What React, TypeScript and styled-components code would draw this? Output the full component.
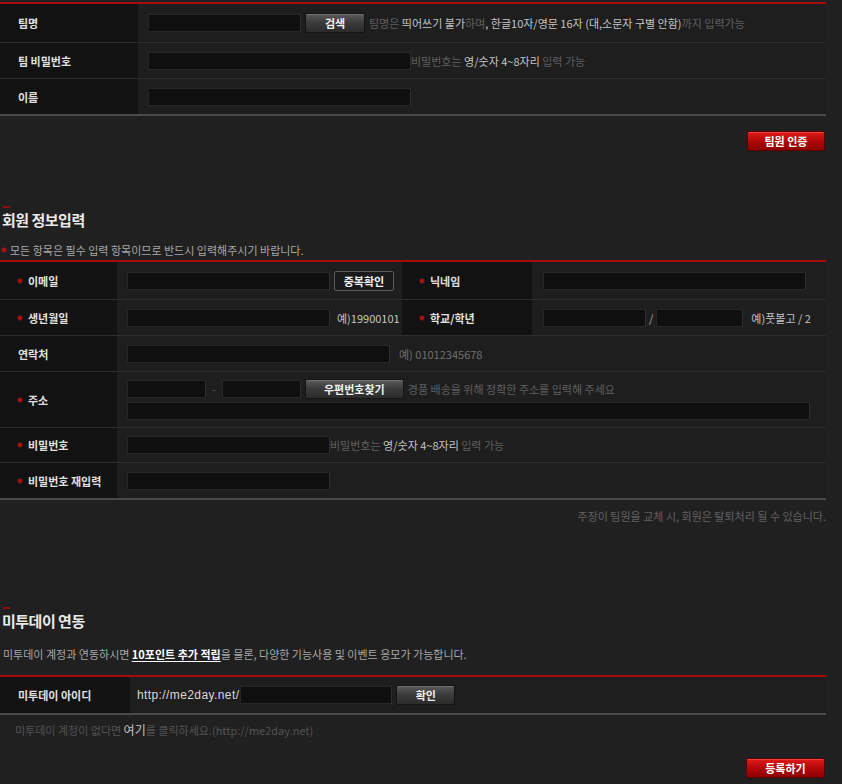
import React from 'react';
import styled, { createGlobalStyle, css } from 'styled-components';

const GlobalStyle = createGlobalStyle`
  html, body {
    margin: 0;
    padding: 0;
    background: #202020;
  }
  body {
    font-family: 'Noto Sans CJK KR', 'Liberation Sans', sans-serif;
    font-size: 11px;
    color: #aaa;
  }
`;

const Page = styled.div`
  width: 826px;
  padding-top: 2px;
  padding-bottom: 20px;
`;

const Table = styled.div`
  border-top: 2px solid #a80a0a;
  border-bottom: 2px solid #4a4a4a;
  box-shadow: inset 0 1px 0 #3a0606;
`;

const Row = styled.div<{ $h: number }>`
  display: flex;
  box-sizing: border-box;
  height: ${(p) => p.$h}px;
  & + & {
    border-top: 1px solid #2c2c2c;
  }
`;

const Label = styled.div<{ $w: number }>`
  display: flex;
  align-items: center;
  width: ${(p) => p.$w}px;
  flex-shrink: 0;
  box-sizing: border-box;
  padding-left: 18px;
  background: #121212;
  color: #e0e0e0;
  font-weight: bold;
  font-size: 11px;
`;

const Star = styled.span`
  display: inline-block;
  width: 4px;
  height: 4px;
  margin-right: 6px;
  border-radius: 50%;
  background: #b01010;
  box-shadow: 0 0 2px #d02020;
`;

const Cell = styled.div<{ $pad?: number; $w?: number; $gap?: number }>`
  display: flex;
  align-items: center;
  box-sizing: border-box;
  gap: ${(p) => p.$gap ?? 4}px;
  padding-left: ${(p) => p.$pad ?? 10}px;
  background: #1e1e1e;
  ${(p) =>
    p.$w
      ? css`
          width: ${p.$w}px;
          flex-shrink: 0;
        `
      : css`
          flex: 1;
        `}
`;

const CellStack = styled.div`
  flex: 1;
  display: flex;
  flex-direction: column;
  justify-content: center;
  gap: 3px;
  padding-left: 10px;
  background: #1e1e1e;
`;

const Line = styled.div`
  display: flex;
  align-items: center;
  gap: 4px;
`;

const Input = styled.input<{ $w: number }>`
  width: ${(p) => p.$w}px;
  height: 18px;
  box-sizing: border-box;
  margin: 0;
  padding: 0 4px;
  background: #0f0f0f;
  border: 1px solid #262626;
  border-right-color: #2e2e2e;
  color: #ccc;
  font-size: 11px;
  outline: none;
`;

const GrayButton = styled.button<{ $w: number; $outline?: boolean }>`
  width: ${(p) => p.$w}px;
  height: 20px;
  margin: 0;
  padding: 0;
  font-family: inherit;
  font-size: 11px;
  font-weight: bold;
  color: #f0f0f0;
  border-radius: 2px;
  cursor: pointer;
  ${(p) =>
    p.$outline
      ? css`
          background: #1a1a1a;
          border: 1px solid #5a5a5a;
        `
      : css`
          background: linear-gradient(#5a5a5a, #3a3a3a 50%, #2b2b2b);
          border: 1px solid #151515;
          box-shadow: inset 0 1px 0 #707070;
        `}
`;

const RedButton = styled.button<{ $w: number }>`
  width: ${(p) => p.$w}px;
  height: 20px;
  margin: 0;
  padding: 0;
  font-family: inherit;
  font-size: 11px;
  font-weight: bold;
  color: #fff;
  background: linear-gradient(#e01a1a, #b00808 50%, #8c0000);
  border: 1px solid #5a0000;
  border-radius: 2px;
  box-shadow: inset 0 1px 0 #f04040;
  cursor: pointer;
`;

const Help = styled.span<{ $bright?: boolean }>`
  color: ${(p) => (p.$bright ? '#c4c4c4' : '#5e5e5e')};
  font-size: 11px;
  white-space: nowrap;
`;

const HelpGroup = styled.span<{ $shift?: number }>`
  margin-left: ${(p) => p.$shift ?? 0}px;
  white-space: nowrap;
`;

const ButtonBar = styled.div<{ $top: number }>`
  display: flex;
  justify-content: flex-end;
  margin-top: ${(p) => p.$top}px;
  padding-right: 1px;
`;

const SectionHead = styled.div<{ $top: number }>`
  margin-top: ${(p) => p.$top}px;
  padding-left: 3px;
`;

const Marker = styled.div`
  width: 7px;
  height: 2px;
  background: #8a1010;
`;

const Title = styled.h2`
  margin: 2px 0 0 -1px;
  font-size: 15px;
  line-height: 20px;
  font-weight: bold;
  color: #eaeaea;
  letter-spacing: -0.5px;
`;

const Notice = styled.div<{ $top: number; $bottom: number }>`
  display: flex;
  align-items: center;
  margin: ${(p) => p.$top}px 0 ${(p) => p.$bottom}px 3px;
  line-height: 16px;
  color: #a8a8a8;
  font-size: 11px;
`;

const Strong = styled.span`
  color: #fff;
  font-weight: bold;
  text-decoration: underline;
  text-underline-offset: 2px;
`;

const RightNote = styled.div`
  margin-top: 9px;
  text-align: right;
  line-height: 14px;
  color: #616161;
  font-size: 11px;
`;

const FootNote = styled.div`
  margin-top: 8px;
  padding-left: 15px;
  line-height: 14px;
  font-size: 11px;
  color: #535353;
`;

const Slash = styled.span`
  color: #aaa;
  padding: 0 3px;
`;

const Dash = styled.span`
  color: #5e5e5e;
  padding: 0 2px;
`;

const Url = styled.span`
  color: #d8d8d8;
  font-size: 12px;
  letter-spacing: 0.4px;
  font-family: 'Liberation Sans', sans-serif;
`;

function PasswordHelp() {
  return (
    <HelpGroup $shift={-4}>
      <Help>비밀번호는 </Help>
      <Help $bright>영/숫자 4~8자리</Help>
      <Help> 입력 가능</Help>
    </HelpGroup>
  );
}

function App() {
  return (
    <Page>
      <GlobalStyle />

      <Table>
        <Row $h={38}>
          <Label $w={138}>팀명</Label>
          <Cell>
            <Input $w={153} />
            <GrayButton $w={60}>검색</GrayButton>
            <HelpGroup>
              <Help>팀명은 </Help>
              <Help $bright>띄어쓰기 불가</Help>
              <Help>하며</Help>
              <Help $bright>, 한글10자/영문 16자 (대,소문자 구별 안함)</Help>
              <Help>까지 입력가능</Help>
            </HelpGroup>
          </Cell>
        </Row>
        <Row $h={36}>
          <Label $w={138}>팀 비밀번호</Label>
          <Cell>
            <Input $w={263} />
            <PasswordHelp />
          </Cell>
        </Row>
        <Row $h={36}>
          <Label $w={138}>이름</Label>
          <Cell>
            <Input $w={263} />
          </Cell>
        </Row>
      </Table>

      <ButtonBar $top={15}>
        <RedButton $w={78}>팀원 인증</RedButton>
      </ButtonBar>

      <SectionHead $top={55}>
        <Marker />
        <Title>회원 정보입력</Title>
      </SectionHead>
      <Notice $top={12} $bottom={2}>
        <Star style={{ marginRight: 4, marginLeft: -1 }} />
        모든 항목은 필수 입력 항목이므로 반드시 입력해주시기 바랍니다.
      </Notice>

      <Table>
        <Row $h={37}>
          <Label $w={117}>
            <Star />
            이메일
          </Label>
          <Cell $w={285}>
            <Input $w={203} />
            <GrayButton $w={60} $outline>
              중복확인
            </GrayButton>
          </Cell>
          <Label $w={130}>
            <Star />
            닉네임
          </Label>
          <Cell $pad={11}>
            <Input $w={263} />
          </Cell>
        </Row>
        <Row $h={36}>
          <Label $w={117}>
            <Star />
            생년월일
          </Label>
          <Cell $w={285}>
            <Input $w={203} />
            <Help $bright style={{ marginLeft: 3 }}>
              예)19900101
            </Help>
          </Cell>
          <Label $w={130}>
            <Star />
            학교/학년
          </Label>
          <Cell $pad={11} $gap={0}>
            <Input $w={103} />
            <Slash>/</Slash>
            <Input $w={87} />
            <Help $bright style={{ marginLeft: 8 }}>
              예)풋볼고 / 2
            </Help>
          </Cell>
        </Row>
        <Row $h={36}>
          <Label $w={117}>연락처</Label>
          <Cell>
            <Input $w={263} />
            <Help style={{ marginLeft: 5, color: '#707070' }}>예) 01012345678</Help>
          </Cell>
        </Row>
        <Row $h={56}>
          <Label $w={117}>
            <Star />
            주소
          </Label>
          <CellStack>
            <Line>
              <Input $w={79} />
              <Dash>-</Dash>
              <Input $w={79} />
              <GrayButton $w={99}>우편번호찾기</GrayButton>
              <Help>경품 배송을 위해 정확한 주소를 입력해 주세요</Help>
            </Line>
            <Input $w={683} />
          </CellStack>
        </Row>
        <Row $h={35}>
          <Label $w={117}>
            <Star />
            비밀번호
          </Label>
          <Cell>
            <Input $w={203} />
            <PasswordHelp />
          </Cell>
        </Row>
        <Row $h={36}>
          <Label $w={117}>
            <Star />
            비밀번호 재입력
          </Label>
          <Cell>
            <Input $w={203} />
          </Cell>
        </Row>
      </Table>

      <RightNote>주장이 팀원을 교체 시, 회원은 탈퇴처리 될 수 있습니다.</RightNote>

      <SectionHead $top={84}>
        <Marker />
        <Title>미투데이 연동</Title>
      </SectionHead>
      <Notice $top={15} $bottom={13}>
        미투데이 계정과 연동하시면&nbsp;<Strong>10포인트 추가 적립</Strong>을 물론, 다양한 기능사용
        및 이벤트 응모가 가능합니다.
      </Notice>

      <Table>
        <Row $h={36}>
          <Label $w={130}>미투데이 아이디</Label>
          <Cell $pad={7}>
            <Url>http://me2day.net/</Url>
            <Input $w={152} style={{ marginLeft: -3 }} />
            <GrayButton $w={59}>확인</GrayButton>
          </Cell>
        </Row>
      </Table>

      <FootNote>
        미투데이 계정이 없다면 <Help $bright style={{ fontSize: 12 }}>여기</Help>를
        클릭하세요.(http://me2day.net)
      </FootNote>

      <ButtonBar $top={21}>
        <RedButton $w={79}>등록하기</RedButton>
      </ButtonBar>
    </Page>
  );
}

export default App;
